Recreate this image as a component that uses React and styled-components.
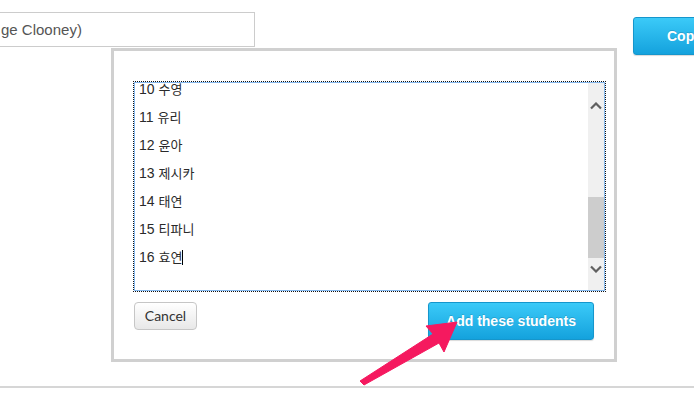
import React from "react";
import styled, { createGlobalStyle } from "styled-components";

const Global = createGlobalStyle`
  html, body { margin: 0; padding: 0; background: #fff; }
  body { font-family: "Liberation Sans", Arial, sans-serif; }
  * { box-sizing: border-box; }
`;

const Page = styled.div`
  position: relative;
  width: 694px;
  height: 397px;
  overflow: hidden;
  padding-top: 12px;
  background: #fff;
`;

const Header = styled.div`
  display: flex;
  align-items: flex-start;
  height: 36px;
`;

const SearchInput = styled.div`
  margin-left: -8px;
  width: 263px;
  height: 35px;
  flex: none;
  border: 1px solid #cccccc;
  padding-left: 8px;
  font-size: 15px;
  line-height: 33px;
  color: #555;
  white-space: nowrap;
  overflow: hidden;
`;

const BlueButton = styled.button`
  flex: none;
  border: 1px solid #1596cc;
  border-radius: 3px;
  background: linear-gradient(#3bcaf8, #14a2dd);
  color: #fff;
  font-family: "Liberation Sans", Arial, sans-serif;
  font-weight: bold;
  font-size: 14px;
  text-shadow: 0 -1px 0 rgba(0, 0, 0, 0.15);
  box-shadow: 0 1px 1px rgba(0, 0, 0, 0.15);
  cursor: pointer;
  white-space: nowrap;
`;

const CopyButton = styled(BlueButton)`
  margin-left: 378px;
  margin-top: 5px;
  height: 38px;
  width: 110px;
  padding: 0 0 0 33px;
  text-align: left;
`;

const Panel = styled.div`
  margin-left: 111px;
  width: 506px;
  height: 314px;
  border: 3px solid #d0d0d0;
  padding: 31px 9px 0 20px;
  background: #fff;
`;

const ListBox = styled.div`
  display: flex;
  height: 209px;
  border: 1px solid #86b9ee;
  outline: 1px dotted #111;
  overflow: hidden;
  background: #fff;
`;

const Lines = styled.div`
  flex: 1;
  padding-left: 4px;
  margin-top: -8px;
`;

const Line = styled.div`
  height: 28px;
  line-height: 28px;
  font-size: 14px;
  color: #2a2a2a;
  white-space: nowrap;
`;

const Name = styled.span`
  font-family: "Noto Sans CJK KR", "Liberation Sans", sans-serif;
  font-size: 13px;
`;

const Caret = styled.span`
  display: inline-block;
  width: 1px;
  height: 15px;
  background: #000;
  vertical-align: -3px;
`;

const Scrollbar = styled.div`
  width: 16px;
  flex: none;
  background: #f0f0f0;
  display: grid;
  grid-template-rows: 46px 68px 61px 22px 1fr;
`;

const ArrowCell = styled.div`
  display: flex;
  align-items: center;
  justify-content: center;
`;

const Thumb = styled.div`
  background: #cdcdcd;
`;

const Actions = styled.div`
  display: flex;
  justify-content: space-between;
  align-items: flex-start;
  margin-top: 11px;
  padding-right: 11px;
`;

const CancelButton = styled.button`
  width: 63px;
  height: 28px;
  border: 1px solid #c6c6c6;
  border-radius: 4px;
  background: linear-gradient(#ffffff, #e8e8e8);
  color: #333;
  font-family: Lato, "Open Sans", sans-serif;
  font-size: 14px;
  padding: 0 0 2px;
  cursor: pointer;
`;

const AddButton = styled(BlueButton)`
  width: 166px;
  height: 38px;
  padding: 0;
`;

const Divider = styled.div`
  margin-top: 24px;
  height: 2px;
  background: #d6d6d6;
`;

const Annotation = styled.svg`
  position: absolute;
  left: 0;
  top: 0;
  pointer-events: none;
`;

const Chevron = ({ up }) => (
  <svg width="12" height="8" viewBox="0 0 12 8">
    <path
      d={up ? "M1 6.5 L6 1.5 L11 6.5" : "M1 1.5 L6 6.5 L11 1.5"}
      fill="none"
      stroke="#606060"
      strokeWidth="2.2"
    />
  </svg>
);

const students = [
  ["10", "수영"],
  ["11", "유리"],
  ["12", "윤아"],
  ["13", "제시카"],
  ["14", "태연"],
  ["15", "티파니"],
  ["16", "효연"],
];

export default function App() {
  return (
    <>
      <Global />
      <Page>
        <Header>
          <SearchInput>ge Clooney)</SearchInput>
          <CopyButton>Copy link</CopyButton>
        </Header>
        <Panel>
          <ListBox>
            <Lines>
              {students.map(([n, name], i) => (
                <Line key={n}>
                  {n} <Name>{name}</Name>
                  {i === students.length - 1 && <Caret />}
                </Line>
              ))}
            </Lines>
            <Scrollbar>
              <ArrowCell>
                <Chevron up />
              </ArrowCell>
              <div />
              <Thumb />
              <ArrowCell>
                <Chevron />
              </ArrowCell>
              <div />
            </Scrollbar>
          </ListBox>
          <Actions>
            <CancelButton>Cancel</CancelButton>
            <AddButton>Add these students</AddButton>
          </Actions>
        </Panel>
        <Divider />
        <Annotation width="694" height="397" viewBox="0 0 694 397">
          <polygon
            points="360,381 433,334 426,326 457,322 444,352 439,343 364,385"
            fill="#f5195f"
            stroke="#f5195f"
            strokeWidth="1"
            strokeLinejoin="round"
          />
        </Annotation>
      </Page>
    </>
  );
}
